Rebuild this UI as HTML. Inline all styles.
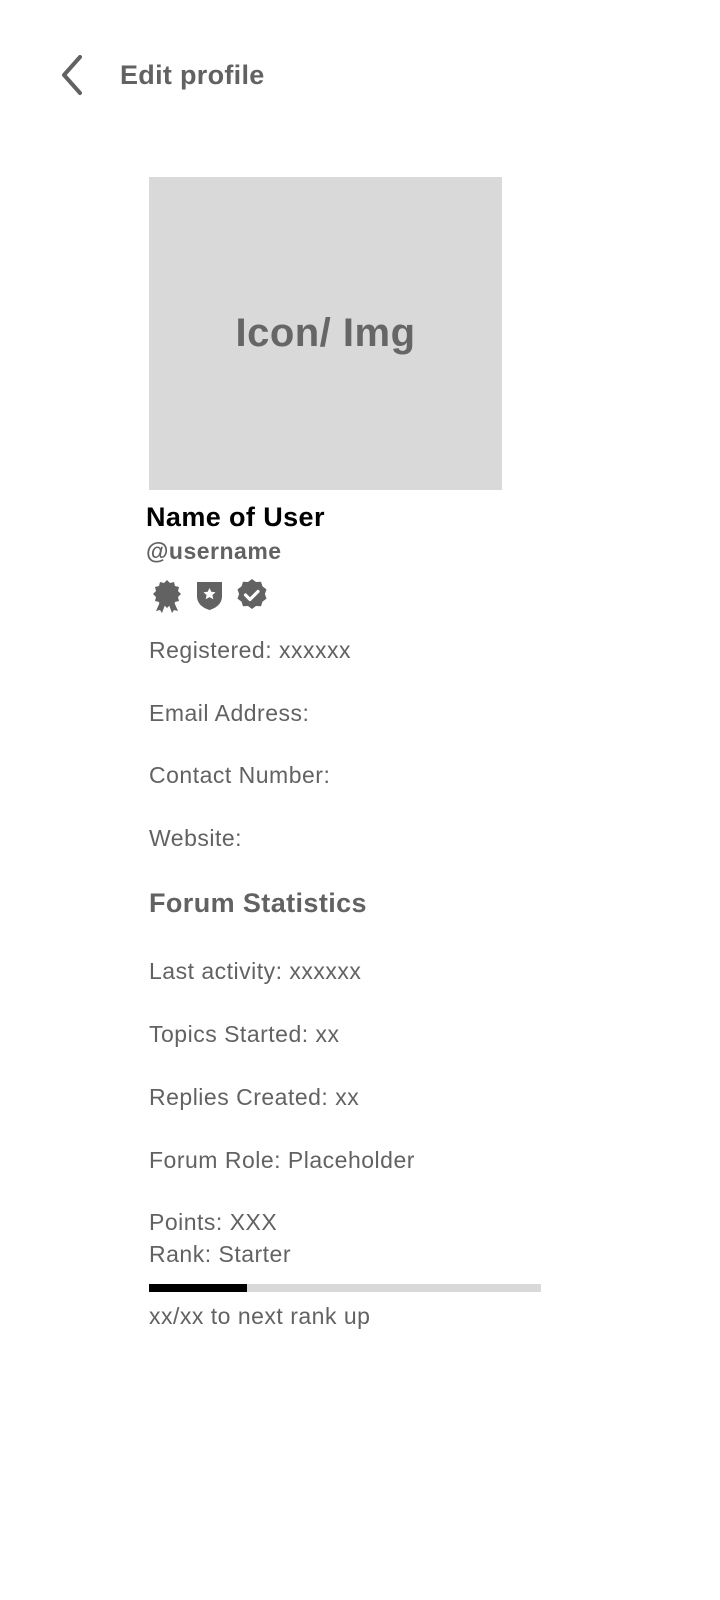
<!DOCTYPE html>
<html><head><meta charset="utf-8"><style>
body{margin:0;width:720px;height:1600px;background:#fff;font-family:"Liberation Sans",sans-serif;color:#626262;position:relative;overflow:hidden}
.a{position:absolute;white-space:nowrap}
.t{font-size:23px;left:149px;line-height:26px;letter-spacing:0.5px}
</style></head><body>
<svg class="a" style="left:56px;top:54px" width="30" height="42" viewBox="0 0 30 42"><path d="M24 3 L8 21 L24 39" fill="none" stroke="#626262" stroke-width="4" stroke-linecap="round" stroke-linejoin="round"/></svg>
<div class="a" style="left:120px;top:59px;font-size:27px;font-weight:bold;line-height:32px;letter-spacing:0.3px">Edit profile</div>
<div class="a" style="left:149px;top:177px;width:353px;height:313px;background:#d9d9d9;display:flex;align-items:center;justify-content:center;font-size:40px;font-weight:bold;color:#666;letter-spacing:0.5px">Icon/ Img</div>
<div class="a" style="left:146px;top:501px;font-size:27px;font-weight:bold;color:#000;line-height:32px;letter-spacing:0.4px">Name of User</div>
<div class="a" style="left:146px;top:537px;font-size:23px;font-weight:bold;line-height:28px;letter-spacing:0.5px">@username</div>
<svg class="a" style="left:150px;top:578px" width="120" height="36" viewBox="0 0 120 36">
<g fill="#626262">
<path d="M17 2 l3 3 4-1 1 4 4 1-1 4 3 3-3 3 1 4-4 1-1 4-4-1-3 3-3-3-4 1-1-4-4-1 1-4-3-3 3-3-1-4 4-1 1-4 4 1z"/>
<path d="M10 24 l-4 9 4-1 2 3 3-8z M24 24 l4 9-4-1-2 3-3-8z"/>
<path d="M47 4 h25 v14 c0 8-6 12-12.5 14 c-6.5-2-12.5-6-12.5-14z"/>
<path d="M102 1 l4 3 5-.3 1.5 4.7 4 3-1.6 4.6 1.6 4.6-4 3-1.5 4.7-5-.3-4 3-4-3-5 .3-1.5-4.7-4-3 1.6-4.6-1.6-4.6 4-3 1.5-4.7 5 .3z"/>
</g>
<path d="M59.5 10 l1.8 3.8 4.2.5-3.1 2.8.9 4.1-3.8-2.1-3.8 2.1.9-4.1-3.1-2.8 4.2-.5z" fill="#fff"/>
<path d="M95.5 17 l4.5 4.5 8-8" fill="none" stroke="#fff" stroke-width="3.2" stroke-linecap="round" stroke-linejoin="round"/>
</svg>
<div class="a t" style="top:637px">Registered: xxxxxx</div>
<div class="a t" style="top:700px">Email Address:</div>
<div class="a t" style="top:762px">Contact Number:</div>
<div class="a t" style="top:825px">Website:</div>
<div class="a t" style="top:888px;font-size:27px;font-weight:bold;line-height:30px;letter-spacing:0.4px">Forum Statistics</div>
<div class="a t" style="top:958px">Last activity: xxxxxx</div>
<div class="a t" style="top:1021px">Topics Started: xx</div>
<div class="a t" style="top:1084px">Replies Created: xx</div>
<div class="a t" style="top:1147px">Forum Role: Placeholder</div>
<div class="a t" style="top:1209px">Points: XXX</div>
<div class="a t" style="top:1241px">Rank: Starter</div>
<div class="a" style="left:149px;top:1284px;width:392px;height:8px;background:#d9d9d9"></div>
<div class="a" style="left:149px;top:1284px;width:98px;height:8px;background:#000"></div>
<div class="a t" style="top:1303px">xx/xx to next rank up</div>
</body></html>
